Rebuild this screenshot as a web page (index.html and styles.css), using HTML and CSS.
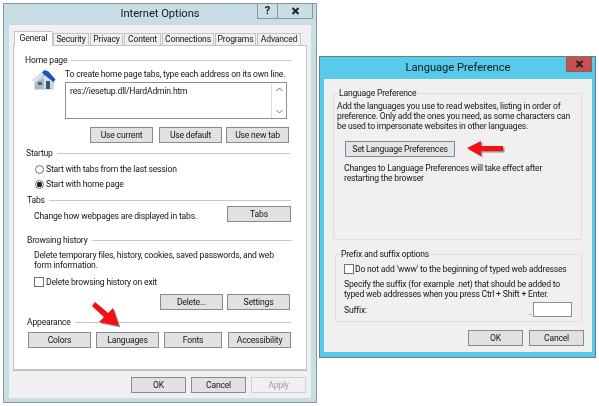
FILE: index.html
```html
<!DOCTYPE html>
<html lang="en">
<head>
<meta charset="utf-8">
<title>Internet Options and Language Preference</title>
<link rel="stylesheet" href="styles.css">
</head>
<body>
<div class="desktop">
  <section class="window ie">
    <header class="titlebar ie-title">
      <span></span>
      <h1 class="title">Internet Options</h1>
      <div class="controls">
        <span class="cap help">?</span>
        <span class="cap close">
          <svg width="9" height="8" viewBox="0 0 9 8"><path d="M1.5 1l6 6M7.5 1l-6 6" stroke="#222" stroke-width="2"/></svg>
        </span>
      </div>
    </header>
    <div class="client ie-client">
      <nav class="tabs">
        <span class="tab active">General</span>
        <span class="tab w-security">Security</span>
        <span class="tab w-privacy">Privacy</span>
        <span class="tab w-content">Content</span>
        <span class="tab w-connections">Connections</span>
        <span class="tab w-programs">Programs</span>
        <span class="tab w-advanced">Advanced</span>
      </nav>
      <div class="panel">
        <div class="legend-row home-legend"><span>Home page</span><i></i></div>
        <div class="home-body">
          <svg class="house" width="24" height="22" viewBox="0 0 24 22">
            <path d="M3 10.5L12 4l9 6.5V20H3z" fill="#d9dfe4" stroke="#8a949c" stroke-width=".6"/>
            <path d="M3 13v7h9V9z" fill="#aeb8c0"/>
            <path d="M0.5 11.5L12.5 1l4 1.5 7 8-2 2.5-9-7-9 7z" fill="#1f4fb8"/>
            <path d="M0.5 11.5L10 3l2 3-8.500 7.500z" fill="#dfe5ea"/>
            <rect x="14" y="12" width="4" height="8" fill="#2a5c86"/>
            <rect x="6" y="13" width="4" height="3" fill="#51616e"/>
          </svg>
          <div class="home-main">
            <p class="home-hint">To create home page tabs, type each address on its own line.</p>
            <div class="addr">
              <span class="addr-text">res://iesetup.dll/HardAdmin.htm</span>
              <div class="scroll">
                <svg width="7" height="5" viewBox="0 0 7 5"><path d="M.5 4L3.500 1l3 3" fill="none" stroke="#777"/></svg>
                <svg width="7" height="5" viewBox="0 0 7 5"><path d="M.5 1l3 3 3-3" fill="none" stroke="#777"/></svg>
              </div>
            </div>
          </div>
        </div>
        <div class="btn-row home-btns">
          <button class="btn b63">Use current</button>
          <button class="btn b63 g6">Use default</button>
          <button class="btn b63 g4">Use new tab</button>
        </div>
        <div class="legend-row startup-legend"><span>Startup</span><i></i></div>
        <label class="opt radio-first"><span class="radio"></span>Start with tabs from the last session</label>
        <label class="opt radio-second"><span class="radio on"></span>Start with home page</label>
        <div class="legend-row tabs-legend"><span>Tabs</span><i></i></div>
        <div class="tabs-body">
          <span class="tabs-text">Change how webpages are displayed in tabs.</span>
          <button class="btn b64">Tabs</button>
        </div>
        <div class="legend-row history-legend"><span>Browsing history</span><i></i></div>
        <p class="history-text">Delete temporary files, history, cookies, saved passwords, and web form information.</p>
        <label class="opt history-check"><span class="check"></span>Delete browsing history on exit</label>
        <div class="btn-row history-btns">
          <button class="btn b63">Delete...</button>
          <button class="btn b63 g4">Settings</button>
        </div>
        <div class="legend-row appearance-legend"><span>Appearance</span><i></i></div>
        <div class="appearance-btns">
          <button class="btn b63">Colors</button>
          <button class="btn b63">Languages</button>
          <button class="btn b58">Fonts</button>
          <button class="btn b63 g1">Accessibility</button>
        </div>
      </div>
      <footer class="foot ie-foot">
        <button class="btn b55">OK</button>
        <button class="btn b55">Cancel</button>
        <button class="btn b55 disabled">Apply</button>
      </footer>
    </div>
  </section>

  <section class="window lang">
    <header class="titlebar lang-title">
      <span></span>
      <h1 class="title">Language Preference</h1>
      <div class="controls">
        <span class="cap red">
          <svg width="9" height="8" viewBox="0 0 9 8"><path d="M1.500 1l6 6M7.500 1l-6 6" stroke="#222" stroke-width="2"/></svg>
        </span>
      </div>
    </header>
    <div class="client lang-client">
      <fieldset class="group lang-group">
        <legend>Language Preference</legend>
        <p class="lang-text">Add the languages you use to read websites, listing in order of preference. Only add the ones you need, as some characters can be used to impersonate websites in other languages.</p>
        <button class="btn set-lang">Set Language Preferences</button>
        <p class="lang-note">Changes to Language Preferences will take effect after restarting the browser</p>
      </fieldset>
      <fieldset class="group prefix-group">
        <legend>Prefix and suffix options</legend>
        <label class="opt www"><span class="check"></span>Do not add 'www' to the beginning of typed web addresses</label>
        <p class="suffix-text">Specify the suffix (for example .net) that should be added to typed web addresses when you press Ctrl + Shift + Enter.</p>
        <div class="suffix-row">
          <span>Suffix:</span>
          <span class="suffix-field"><span>.</span><span class="suffix-input"></span></span>
        </div>
      </fieldset>
      <footer class="foot lang-foot">
        <button class="btn b55">OK</button>
        <button class="btn b55">Cancel</button>
      </footer>
    </div>
  </section>

  <svg class="arrow arrow-lang" width="32" height="30" viewBox="0 0 32 30">
    <path d="M4 2L1 6l12 11-5 5 20 4-6-18-5 5z" fill="#5a5a5a" opacity=".6" transform="translate(1.500 1.500)"/>
    <path d="M4 2L1 6l12 11-5 5 20 4-6-18-5 5z" fill="#f50f14"/>
  </svg>
  <svg class="arrow arrow-set" width="40" height="20" viewBox="0 0 40 20">
    <path d="M1 9L15 2v5h22v5H15v5z" fill="#5a5a5a" opacity=".6" transform="translate(1.500 1.500)"/>
    <path d="M1 9L15 2v5h22v5H15v5z" fill="#f50f14"/>
  </svg>
</div>
</body>
</html>
```

FILE: styles.css
```css
* { box-sizing: border-box; }
html, body { margin: 0; padding: 0; background: #fff; }
body {
  font-family: Roboto, "Open Sans", sans-serif;
  font-size: 8.6px;
  letter-spacing: -0.2px;
  line-height: 10px;
  color: #151515;
}
p { margin: 0; }
.desktop {
  position: relative;
  width: 599px;
  height: 406px;
  overflow: hidden;
  filter: blur(0.3px);
}
.window { position: absolute; display: flex; flex-direction: column; }
.ie {
  left: 3px; top: 3px; width: 314px; height: 400px;
  background: #c8dde4;
  border: 1px solid #8b979d;
  padding: 0 5px 4px;
}
.lang {
  left: 319px; top: 56px; width: 277px; height: 302px;
  background: #57cbe9;
  border: 1px solid #6b7d85;
  padding: 0 3px 5px 4px;
}
.titlebar {
  display: grid;
  grid-template-columns: 1fr auto 1fr;
  align-items: start;
  flex: none;
}
.ie-title { height: 21px; }
.lang-title { height: 22px; }
.title {
  margin: 0;
  font-size: 11.2px;
  font-weight: 400;
  letter-spacing: -0.05px;
  line-height: 20px;
  color: #101c22;
}
.lang-title .title { line-height: 21px; }
.controls { justify-self: end; display: flex; }
.cap {
  display: flex; align-items: center; justify-content: center;
  height: 15px;
  font-weight: 700;
  font-size: 11px;
}
.help { width: 21px; border: 1px solid #8b979d; border-top: 0; }
.close { width: 35px; border: 1px solid #8b979d; border-width: 0 1px 1px 0; margin-right: -2px; }
.red { width: 26px; background: #c75050; border: 1px solid #8e5c5c; border-top: 0; margin-right: 0; }
.client { flex: 1; background: #f0f0f0; }
.ie-client { padding: 6px 0 0 4px; display: flex; flex-direction: column; }
.tabs { display: flex; align-items: flex-end; height: 14px; padding-left: 1px; }
.tab {
  height: 12px;
  border: 1px solid #c4c4c4;
  border-bottom: 0;
  background: #f0f0f0;
  text-align: center;
  line-height: 11px;
  margin-right: 1px;
  white-space: nowrap;
}
.tab.active {
  width: 39px; height: 15px; background: #fff; margin-bottom: -1px; position: relative; z-index: 1; margin-right: 0; line-height: 12px;
}
.w-security { width: 36px; }
.w-privacy { width: 33px; }
.w-content { width: 37px; }
.w-connections { width: 52px; }
.w-programs { width: 41px; }
.w-advanced { width: 44px; }
.panel {
  width: 294px; height: 326px;
  background: #fff;
  border: 1px solid #c4c4c4;
  border-bottom-width: 2px;
  padding-top: 9px;
}
.legend-row { display: flex; align-items: center; height: 10px; gap: 4px; }
.legend-row i { flex: 1; height: 1px; background: #c8c8c8; }
.home-legend { margin: 0 14px 0 11px; }
.startup-legend { margin: 5px 16px 0 12px; }
.tabs-legend { margin: 6px 15px 0 13px; }
.history-legend { margin: 13px 14px 0 13px; }
.appearance-legend { margin: 7px 15px 0 13px; }
.home-body { display: flex; margin: 0 0 0 18px; }
.house { margin-top: 4px; margin-right: 9px; flex: none; }
.home-main { width: 222px; }
.home-hint { padding-top: 4px; line-height: 10px; white-space: nowrap; }
.addr {
  display: flex; justify-content: space-between;
  height: 37px; margin-top: 3px;
  background: #fff;
  border: 1px solid #8f8f8f;
}
.addr-text { padding: 3px 0 0 4px; }
.scroll {
  width: 15px; border-left: 1px solid #dcdcdc;
  display: flex; flex-direction: column; justify-content: space-between; align-items: center;
  padding: 4px 0;
}
.btn-row { display: flex; }
.btn {
  flex: none;
  height: 16px;
  padding: 0;
  font: inherit;
  letter-spacing: inherit;
  line-height: 12px;
  color: #151515;
  background: #e1e1e1;
  border: 1px solid #8a8a8a;
  white-space: nowrap;
}
.b63 { width: 63px; }
.b64 { width: 64px; }
.b58 { width: 58px; }
.b55 { width: 55px; }
.g6 { margin-left: 6px; }
.g4 { margin-left: 4px; }
.g1 { margin-left: 1px; }
.home-btns { margin: 8px 0 0 76px; }
.opt { display: flex; align-items: center; height: 10px; }
.radio, .check { flex: none; display: block; background: #fff; border: 1px solid #6f6f6f; }
.radio { width: 9px; height: 9px; border-radius: 50%; margin-right: 2px; }
.radio.on { background: radial-gradient(circle, #222 0 2.4px, #fff 3px); }
.check { width: 10px; height: 10px; margin-right: 2px; }
.radio-first { margin: 6px 0 0 21px; }
.radio-second { margin: 5px 0 0 21px; }
.tabs-body { display: flex; justify-content: space-between; align-items: center; margin: 1px 15px 0 20px; height: 16px; }
.tabs-text { margin-top: 3px; }
.history-text { margin: 5px 14px 0 20px; line-height: 10px; }
.history-check { margin: 7px 0 0 20px; }
.history-btns { margin: 7px 0 0 146px; }
.appearance-btns { display: flex; gap: 5px; margin: 5px 0 0 14px; }
.foot { display: flex; }
.ie-foot { gap: 5px; margin: 6px 0 0 118px; }
.lang-client { padding: 9px 10px 0 9px; }
.group {
  margin: 0;
  padding: 0;
  border: 1px solid #dedede;
  border-radius: 2px;
  min-width: 0;
}
.group legend { padding: 0 1px; margin-left: 4px; line-height: 10px; }
.lang-group { width: 249px; height: 152px; }
.lang-text { margin: 3px 4px 0 3px; }
.set-lang {
  display: block;
  width: 110px; height: 16px;
  margin: 10px 0 0 11px;
  border-color: #6f8ba0;
  background: #e5e5e5;
}
.lang-note { margin: 6px 20px 0 10px; }
.prefix-group { width: 247px; height: 73px; margin: 9px 0 0 2px; }
.www { margin: 5px 0 0 8px; }
.www .check { margin-right: 1px; }
.suffix-text { margin: 5px 4px 0 8px; }
.suffix-row { display: flex; justify-content: space-between; align-items: center; margin: 3px 9px 0 8px; height: 15px; }
.suffix-field { display: flex; align-items: flex-end; gap: 2px; }
.suffix-input { display: block; width: 39px; height: 15px; background: #fff; border: 1px solid #8f8f8f; }
.lang-foot { gap: 6px; margin: 8px 0 0 135px; }
.disabled { color: #a0a0a0; background: #f0f0f0; border-color: #cfcfcf; }
.arrow { position: absolute; }
.arrow-lang { left: 91px; top: 300px; }
.arrow-set { left: 466px; top: 139px; }
```
